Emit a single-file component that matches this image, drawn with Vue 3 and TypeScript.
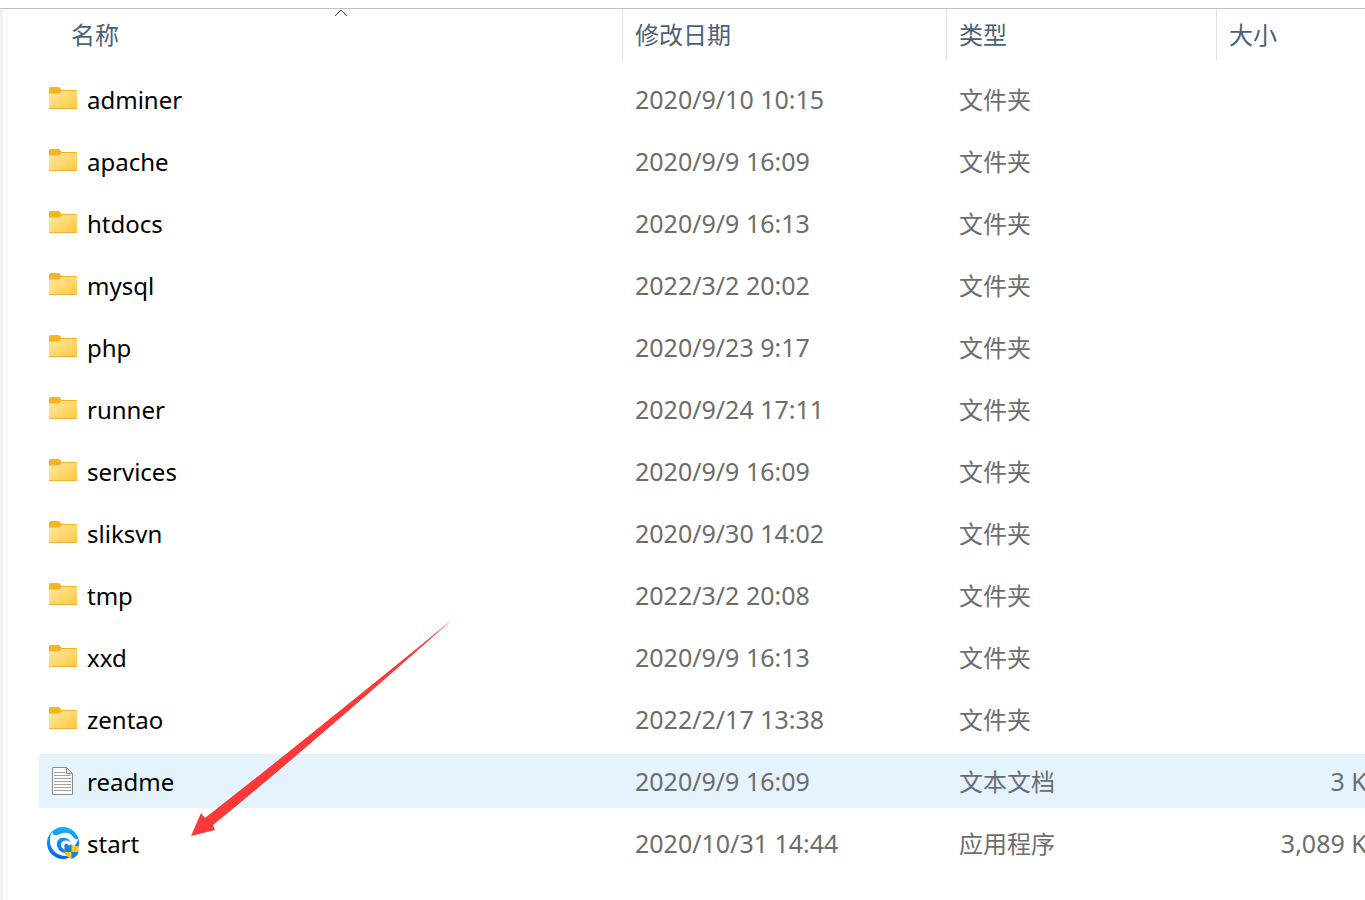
<script setup lang="ts">
type Kind = 'folder' | 'text' | 'app'

interface Entry {
  name: string
  modified: string
  kind: Kind
  size?: string
  hovered?: boolean
}

const typeNames: Record<Kind, string> = {
  folder: '文件夹',
  text: '文本文档',
  app: '应用程序',
}

const columns = [
  { key: 'name', label: '名称' },
  { key: 'date', label: '修改日期' },
  { key: 'type', label: '类型' },
  { key: 'size', label: '大小' },
]

const entries: Entry[] = [
  { name: 'adminer', modified: '2020/9/10 10:15', kind: 'folder' },
  { name: 'apache', modified: '2020/9/9 16:09', kind: 'folder' },
  { name: 'htdocs', modified: '2020/9/9 16:13', kind: 'folder' },
  { name: 'mysql', modified: '2022/3/2 20:02', kind: 'folder' },
  { name: 'php', modified: '2020/9/23 9:17', kind: 'folder' },
  { name: 'runner', modified: '2020/9/24 17:11', kind: 'folder' },
  { name: 'services', modified: '2020/9/9 16:09', kind: 'folder' },
  { name: 'sliksvn', modified: '2020/9/30 14:02', kind: 'folder' },
  { name: 'tmp', modified: '2022/3/2 20:08', kind: 'folder' },
  { name: 'xxd', modified: '2020/9/9 16:13', kind: 'folder' },
  { name: 'zentao', modified: '2022/2/17 13:38', kind: 'folder' },
  { name: 'readme', modified: '2020/9/9 16:09', kind: 'text', size: '3 KB', hovered: true },
  { name: 'start', modified: '2020/10/31 14:44', kind: 'app', size: '3,089 KB' },
]

const textLines = [8, 11, 14, 17, 20, 23, 26]
</script>

<template>
  <main class="explorer">
    <svg class="defs" width="0" height="0" aria-hidden="true">
      <defs>
        <linearGradient id="folder-face" x1="0" y1="0" x2="1" y2="1">
          <stop offset="0" stop-color="#ffe9a6" />
          <stop offset="1" stop-color="#ffc73a" />
        </linearGradient>
        <linearGradient id="app-face" x1="0" y1="0" x2="0" y2="1">
          <stop offset="0" stop-color="#12b4fb" />
          <stop offset="1" stop-color="#0762ea" />
        </linearGradient>
      </defs>
    </svg>
    <div class="splitter"></div>
    <div class="list">
      <table>
        <colgroup>
          <col v-for="c in columns" :key="c.key" :class="'col-' + c.key" />
        </colgroup>
        <thead>
          <tr>
            <th v-for="c in columns" :key="c.key" scope="col">
              <button type="button" :class="'head-' + c.key">
                {{ c.label }}
                <svg v-if="c.key === 'name'" class="sort" width="14" height="8" viewBox="0 0 14 8" aria-hidden="true">
                  <path d="M1 7 L7 1 L13 7" fill="none" stroke="#444" stroke-width="1" />
                </svg>
              </button>
            </th>
          </tr>
        </thead>
        <tbody>
          <tr v-for="e in entries" :key="e.name" :class="{ hovered: e.hovered }">
            <td>
              <div class="name">
                <svg v-if="e.kind === 'folder'" width="32" height="32" viewBox="0 0 32 32" aria-hidden="true">
                  <path d="M2 5.5Q2 4 3.5 4H11.5Q12.5 4 13.2 5L14.5 7H29Q30 7 30 8V20H2Z" fill="#f8b41c" />
                  <path d="M2 10.5H11Q12.5 10.5 13.5 9.3Q14.3 8 15.5 8H30V25Q30 26 29 26H3Q2 26 2 25Z" fill="url(#folder-face)" />
                  <path d="M2.3 25.5H29.7" stroke="#f0b234" />
                </svg>
                <svg v-else-if="e.kind === 'text'" width="32" height="32" viewBox="0 0 32 32" aria-hidden="true">
                  <path d="M5.5 2.5H19.5L25.5 8.5V29.5H5.5Z" fill="#fafafa" stroke="#8c8c8c" />
                  <path d="M19.5 2.5V8.5H25.5Z" fill="#e4e4e4" stroke="#8c8c8c" />
                  <path v-for="y in textLines" :key="y" :d="`M7 ${y - 0.5}H${y < 10 ? 18 : 24}`" stroke="#a2a2a2" />
                </svg>
                <svg v-else width="32" height="32" viewBox="0 0 32 32" aria-hidden="true">
                  <circle cx="16" cy="16" r="16" fill="url(#app-face)" />
                  <path d="M5 5Q6 9 10 8Q13 7 16 6Q22 4.500 25.500 9Q27 12 31 12.500Q30 16 27.500 19H25Q24 13 19 11Q12 9.500 10 15Q9 21 14 24.500Q16 25.500 18 26Q19 28 20 29Q11 29 6 23Q2.500 18 3 12Q3 8 5 5Z" fill="#fff" />
                  <path d="M25 17Q22.500 13 18.500 13.500Q14 14 14 18Q14.200 21.500 18 23V20Q16.500 18 18.500 17Q20.500 16 22 18.500Z" fill="#fff" />
                  <path d="M24.500 18Q28 19.500 31.500 19V25Q30 30 24.500 32Q19 30 17.500 25V19Q21 19.500 24.500 18Z" fill="#ffc61a" />
                  <path d="M24.500 18V25H17.500V19Q21 19.500 24.500 18Z" fill="#1583d8" />
                  <path d="M24.500 25H31.500Q30 30 24.500 32Z" fill="#1583d8" />
                </svg>
                <span>{{ e.name }}</span>
              </div>
            </td>
            <td class="meta">{{ e.modified }}</td>
            <td class="meta kind">{{ typeNames[e.kind] }}</td>
            <td class="meta size">{{ e.size }}</td>
          </tr>
        </tbody>
      </table>
    </div>
    <svg class="arrow" width="262" height="217" viewBox="0 0 262 217" aria-hidden="true">
      <path d="M0 217L10 194L14 199Q100 132 262 0Q120 126 22 206L24 211Z" fill="#fd3838" />
    </svg>
  </main>
</template>

<style>
body {
  margin: 0;
  background: #fff;
}
</style>

<style scoped>
.explorer {
  position: relative;
  display: flex;
  box-sizing: border-box;
  min-height: 100vh;
  padding-top: 8px;
  overflow: hidden;
  background: #fff;
  font-family: "Noto Sans", "Noto Sans CJK SC", sans-serif;
}

.defs {
  position: absolute;
}

.splitter {
  flex: none;
  width: 3px;
  margin-top: 1px;
  padding-right: 3px;
  border-right: 2px solid #f8f8f8;
  background: linear-gradient(#f0f0f0, #f0f0f0) left / 3px 100% no-repeat #fff;
}

.list {
  flex: 1;
  min-width: 0;
  margin-left: -8px;
  padding-left: 39px;
  border-top: 1px solid #bfbfbf;
}

table {
  width: calc(100% + 30px);
  table-layout: fixed;
  border-spacing: 0;
}

.col-name {
  width: 583px;
}

.col-date {
  width: 324px;
}

.col-type {
  width: 270px;
}

th {
  height: 59px;
  padding: 0;
  vertical-align: top;
}

th button {
  position: relative;
  display: block;
  width: 100%;
  height: 51px;
  padding: 0 0 0 12px;
  border: 0;
  border-left: 1px solid #e3e3e3;
  background: none;
  color: #4c607a;
  font-family: inherit;
  font-size: 24px;
  line-height: 51px;
  text-align: left;
}

th .head-name {
  padding-left: 32px;
  border-left: 0;
}

.sort {
  position: absolute;
  top: 0;
  left: 50%;
  margin-left: 3px;
}

td {
  box-sizing: border-box;
  height: 62px;
  padding: 0;
  border: solid transparent;
  border-width: 4px 0;
  background-clip: padding-box;
}

.hovered td {
  background-color: #e5f3ff;
}

.hovered td:first-child {
  border-radius: 2px 0 0 2px / 6px 0 0 6px;
}

.name {
  display: flex;
  align-items: center;
  gap: 8px;
  padding-left: 8px;
  color: #000;
  font-size: 24px;
  line-height: 32px;
}

.name span {
  padding-top: 2px;
}

.name svg {
  flex: none;
}

.meta {
  padding-left: 13px;
  color: #6d6d6d;
  font-size: 25px;
  line-height: 32px;
  white-space: nowrap;
}

.kind {
  padding-top: 2px;
  font-size: 24px;
}

.size {
  padding-right: 12px;
  text-align: right;
}

.arrow {
  position: absolute;
  top: 619px;
  left: 191px;
}
</style>
